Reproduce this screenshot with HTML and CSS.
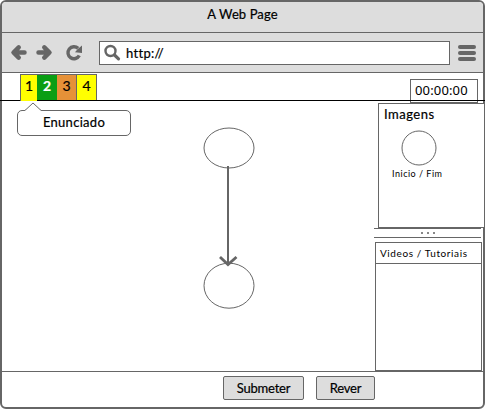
FILE: index.html
```html
<!DOCTYPE html>
<html lang="pt">
<head>
<meta charset="utf-8">
<title>A Web Page</title>
<link rel="stylesheet" href="styles.css">
</head>
<body>
<div class="window">
  <header class="titlebar"><span class="title">A Web Page</span></header>
  <div class="toolbar">
    <svg class="nav" width="97" height="39" viewBox="2 33 97 39">
      <g fill="none" stroke="#666" stroke-width="4.500" stroke-linecap="round" stroke-linejoin="round">
        <path d="M18.700 47.300l-5.200 5.200 5.200 5.200M14 52.500h10.500" />
        <path d="M44.300 47.300l5.200 5.200-5.200 5.200M49 52.500H38.500" />
        <path d="M79.300 55.500a6 6 0 1 1-1.200-7.200" stroke-width="3.400" stroke-linecap="butt"/>
      </g>
      <path d="M82 45.500v7.500l-7-.7 2.500-3z" fill="#666"/>
    </svg>
    <div class="address">
      <svg width="18" height="18" viewBox="0 0 18 18" fill="none" stroke="#666">
        <circle cx="6.500" cy="7" r="5" stroke-width="2.400"/>
        <path d="M10.500 11l4 3.800" stroke-width="3.200" stroke-linecap="round"/>
      </svg>
      <span class="url">http://</span>
    </div>
    <div class="menu"><i></i><i></i><i></i></div>
  </div>
  <div class="strip">
    <nav class="tabs">
      <span class="tab yellow first">1</span><span class="tab green">2</span><span class="tab orange">3</span><span class="tab yellow last">4</span>
    </nav>
    <div class="timer"><span>00:00:00</span></div>
  </div>
  <main class="main">
    <section class="canvas">
      <svg class="diagram" width="372" height="270" viewBox="2 101 372 270" fill="none" stroke="#666">
        <ellipse cx="229" cy="148" rx="25" ry="20"/>
        <ellipse cx="229" cy="285.700" rx="25" ry="22.500"/>
        <path d="M228 166v98" stroke-width="2"/>
        <path d="M220 257l8 7.500 8.500-7.500" stroke-width="2.800"/>
      </svg>
      <div class="callout">
        <svg class="tip" width="18" height="9" viewBox="0 0 18 9"><path d="M0 9L2 7.500 9 1l7 6.500L18 9" fill="#fff" stroke="#666"/></svg>
        <span>Enunciado</span>
      </div>
    </section>
    <aside class="side">
      <section class="images">
        <h2>Imagens</h2>
        <svg width="36" height="36" viewBox="0 0 36 36"><circle cx="18" cy="18" r="17" fill="none" stroke="#666"/></svg>
        <p>Inicio / Fim</p>
      </section>
      <div class="splitter"><i></i><i></i><i></i></div>
      <section class="videos"><h3><span>Videos / Tutoriais</span></h3></section>
    </aside>
  </main>
  <footer class="footer">
    <button class="submit">Submeter</button>
    <button class="review">Rever</button>
  </footer>
</div>
</body>
</html>
```
FILE: styles.css
```css
* { box-sizing: border-box; }
body {
  margin: 0;
  background: #fff;
  color: #000;
  font: 13px/16px Lato, "Open Sans", sans-serif;
  -webkit-text-stroke: 0.2px currentColor;
}
h2, h3, p { margin: 0; font-weight: normal; }
svg { display: block; flex: none; }
.window {
  width: 485px;
  height: 409px;
  display: flex;
  flex-direction: column;
  border: 2px solid #666;
  border-radius: 6px;
  background: #fff;
}
.titlebar {
  flex: none;
  height: 31px;
  padding-top: 4px;
  background: #ddd;
  border-bottom: 1px solid #666;
  border-radius: 4px 4px 0 0;
  text-align: center;
}
.title { letter-spacing: 0.1px; }
.toolbar {
  flex: none;
  height: 40px;
  display: flex;
  background: #ddd;
  border-bottom: 1px solid #666;
}
.address {
  width: 351px;
  height: 24px;
  margin-top: 8px;
  padding-left: 4px;
  display: flex;
  align-items: center;
  border: 1px solid #666;
  background: #fff;
}
.url { margin-left: 4px; letter-spacing: 0.3px; }
.menu {
  width: 18px;
  margin: 12px 0 0 8px;
  display: flex;
  flex-direction: column;
  gap: 2px;
}
.menu i { height: 4px; border-radius: 2px; background: #666; }
.strip {
  position: relative;
  flex: none;
  height: 28px;
  display: flex;
  justify-content: space-between;
  align-items: flex-start;
  padding: 1px 5px 0 18px;
}
.strip::after {
  content: "";
  position: absolute;
  left: -2px;
  right: -2px;
  bottom: 0;
  height: 1px;
  background: #000;
}
.tabs { display: flex; height: 27px; font-size: 14px; }
.tab {
  width: 20px;
  padding-top: 3px;
  border-top: 1px solid #666;
  text-align: center;
}
.yellow { background: #ff0; }
.green { background: #0a9e14; color: #fff; font-weight: bold; }
.orange { background: #e69138; width: 19px; }
.first { position: relative; z-index: 1; width: 17px; border-left: 1px solid #666; }
.last { width: 21px; border-left: 1px solid #666; border-right: 1px solid #666; }
.timer {
  width: 68px;
  height: 24px;
  margin-top: 5px;
  padding: 2px 0 0 4px;
  border: 1px solid #666;
  background: #fff;
  font-family: "Noto Sans", sans-serif;
  letter-spacing: 0.15px;
  -webkit-text-stroke: 0;
}
.main { flex: none; height: 270px; display: flex; }
.canvas { position: relative; flex: none; width: 372px; }
.callout {
  position: absolute;
  left: 15px;
  top: 9px;
  width: 114px;
  height: 26px;
  padding-top: 3px;
  border: 1px solid #666;
  border-radius: 5px;
  background: #fff;
  text-align: center;
  letter-spacing: 0.3px;
}
.tip { position: absolute; left: 6px; top: -9px; }
.side { flex: none; width: 111px; padding-top: 2px; }
.images {
  width: 107px;
  height: 125px;
  margin-left: 4px;
  padding: 2px 0 0 5px;
  border: 1px solid #666;
  background: #fff;
}
.images h2 { font-size: 13px; letter-spacing: 0.5px; }
.images svg { margin: 8px 0 0 17px; }
.images p {
  margin: 1px 0 0 8px;
  font-size: 9px;
  line-height: 14px;
  letter-spacing: 0.5px;
  -webkit-text-stroke: 0;
}
.splitter {
  width: 107px;
  height: 10px;
  display: flex;
  justify-content: center;
  align-items: center;
  gap: 4px;
  border-top: 1px solid #666;
  border-bottom: 1px solid #666;
}
.splitter i { width: 2px; height: 2px; background: #888; }
.videos {
  width: 107px;
  height: 129px;
  margin: 4px 0 0 1px;
  border: 1px solid #666;
}
.videos h3 {
  height: 21px;
  padding: 2px 0 0 4px;
  border-bottom: 1px solid #666;
  font-size: 10px;
  letter-spacing: 0.6px;
  -webkit-text-stroke: 0;
}
.footer {
  flex: 1;
  display: flex;
  padding: 4px 0 0 221px;
  gap: 12px;
  border-top: 1px solid #666;
}
.footer button {
  height: 24px;
  padding: 0;
  border: 1px solid #666;
  border-radius: 2px;
  background: #ddd;
  color: #000;
  font: inherit;
  letter-spacing: -0.2px;
  -webkit-text-stroke: inherit;
}
.submit { width: 81px; }
.review { width: 59px; }
```
